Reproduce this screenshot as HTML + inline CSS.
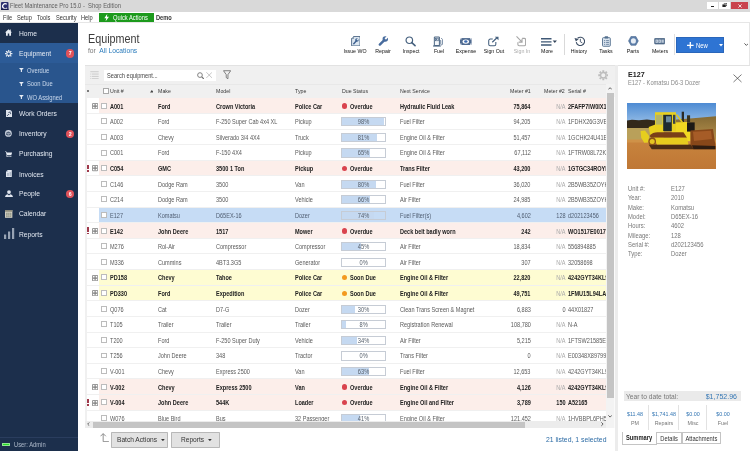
<!DOCTYPE html>
<html>
<head>
<meta charset="utf-8">
<title>Fleet Maintenance Pro</title>
<style>
*{box-sizing:border-box;margin:0;padding:0}
html,body{width:750px;height:451px;overflow:hidden;background:#fff;font-family:"Liberation Sans",sans-serif}
body{position:relative;font-size:6.4px;color:#666}
#app{position:absolute;left:0;top:0;width:750px;height:451px;will-change:transform;opacity:.999}
.abs{position:absolute}
i,em{font-style:normal}
#titlebar{left:0;top:0;width:750px;height:12px;background:#d9d9d9}
#titlebar .t{left:10px;top:1px;transform:scaleX(.842);transform-origin:0 50%;font-size:6.9px;color:#606060;white-space:pre;line-height:10px}
#menubar{left:0;top:12px;width:750px;height:11px;background:#fff}
#menubar span{position:absolute;transform:scaleX(.86);transform-origin:0 50%;top:0.5px;font-size:6.6px;color:#333;line-height:10px}
#qa{left:99px;top:12.8px;width:54.5px;height:9.7px;background:#1c9a1c;color:#fff;font-size:6.7px;line-height:9.7px}
/* sidebar */
#side{left:0;top:23px;width:78px;height:428px;background:#1c2f4c}
#side .sel{left:0;top:20.3px;width:78px;height:60px;background:linear-gradient(#2c5b97 0,#2c5b97 20px,#29558d 20px)}
#side .it{position:absolute;transform:scaleX(.85);transform-origin:0 50%;left:18.5px;color:#e3e9f2;font-size:7.9px;line-height:10px;white-space:nowrap}
#side .sub{position:absolute;transform:scaleX(.86);transform-origin:0 50%;left:27.4px;color:#c9d8ec;font-size:6.75px;line-height:8px;white-space:nowrap}
#side .badge{position:absolute;left:66px;width:8.4px;height:8.4px;border-radius:50%;background:#e0525a;color:#fff;font-size:5.2px;line-height:8.6px;text-align:center;font-weight:bold}
#side svg{position:absolute}
/* main */
#h1{transform:scaleX(.87);transform-origin:0 50%;left:87.5px;top:30.6px;font-size:12.4px;color:#3c3c3c;line-height:17px}
#h2{transform:scaleX(.86);transform-origin:0 50%;left:88px;top:45.5px;font-size:7.8px;color:#777;line-height:10px;white-space:pre}
#h2 b{font-weight:normal;color:#2b7cbc}
.tb{position:absolute;transform:scaleX(.87);top:47.8px;font-size:6.05px;color:#111;text-align:center;width:40px;margin-left:-20px;line-height:7px;white-space:nowrap}
.tbi{position:absolute;top:35px}
/* grid */
#gridbg{left:85px;top:65px;width:532.5px;height:365.5px;background:#f0f0f0;border-top:1px solid #e2e2e2}
#rows{left:0;top:98.4px;width:606.5px;height:323px;overflow:hidden}
.row{position:absolute;left:0;width:607px;height:15.61px;line-height:15.61px;font-size:6.35px;color:#5a5a5a;white-space:nowrap}
.row .bg{position:absolute;left:87.2px;top:0;right:0;bottom:0;background:#fff;border-bottom:.7px solid #f0f0f0}
.row.pink .bg{background:linear-gradient(90deg,#fff 0,#fff 12.1px,#fceeea 12.1px)}
.row.yel .bg{background:linear-gradient(90deg,#fff 0,#fff 12.1px,#fefcd2 12.1px)}
.row.sel .bg{background:linear-gradient(90deg,#fff 0,#fff 12.1px,#c6dcf5 12.1px)}
.row.b{font-weight:bold;color:#222}
.row span{position:absolute;top:.25px;transform:scaleX(.875);transform-origin:0 50%}
.row .c7,.row .c8{transform-origin:100% 50%}
.row .pb{transform:none}
.row .pb em{display:inline-block;transform:scaleX(.875)}
.row .c1{left:110px}.row .c2{left:158px}.row .c3{left:215.5px}.row .c4{left:295px}.row .c5{left:350.4px}
.row .c6{left:400px}.row .c7{right:76.5px}.row .c8{right:41.2px}.row .c8.na{color:#aaa;font-weight:normal}.row .c9{left:568px}
.row .cb{position:absolute;left:101px;top:4.4px;width:6px;height:5.9px;border:0.8px solid #bcbcbc;background:#fff}
.row .exp{position:absolute;left:92.2px;top:4.6px;width:6.2px;height:6.2px}
.row .bang{position:absolute;left:87.4px;top:4.1px;width:1.500px;height:4.2px;background:#a03a4c}
.row .bang:after{content:"";position:absolute;left:0;top:5.2px;width:1.500px;height:1.400px;background:#a03a4c}
.row .dot{position:absolute;left:341.700px;top:5px;width:5.300px;height:5.300px;border-radius:50%}
.dot.red{background:#d9434e}.dot.org{background:#f39a1f}
.row .pb{left:341.3px;top:3.2px;width:44.4px;height:9.2px;border:0.8px solid #c6ccd5;background:#fff;line-height:7.8px;text-align:center;font-size:6.5px;color:#56606c}
.row.sel .pb{background:transparent}
.row .pb i{position:absolute;left:0;top:0;bottom:0;background:#c5d9f1}
.row .pb em{position:relative}
.hd{position:absolute;transform:scaleX(.87);transform-origin:0 50%;top:87.1px;font-size:6.05px;color:#383838;line-height:8px;white-space:nowrap}
/* detail */
#det{left:618px;top:65px;width:132px;height:386px;background:#fff}
.dl{position:absolute;transform:scaleX(.9);transform-origin:0 50%;font-size:6.5px;color:#777;line-height:8px;white-space:nowrap}
.btn{top:432.300px;height:15.400px;background:#e2e2e2;border:.8px solid #b8b8b8;border-radius:.8px;font-size:7.600px;color:#333;line-height:13.600px}
.btn span{position:absolute;white-space:nowrap;transform:scaleX(.87);transform-origin:0 50%}
.amt{position:absolute;width:40px;margin-left:-20px;text-align:center;font-size:6.200px;line-height:8px;white-space:nowrap;transform:scaleX(.87)}
.tab{top:431.600px;height:12.400px;border:.8px solid #c4c4c4;background:#fff;font-size:6.600px;color:#333;text-align:center;line-height:11.800px;white-space:nowrap}
.tab span{display:inline-block;transform:scaleX(.87)}
.row.sel{color:#505e72}

</style>
</head>
<body>
<div id="app">
<div id="titlebar" class="abs"><div class="t abs">Fleet Maintenance Pro 15.0 -  Shop Edition</div>
<svg class="abs" style="left:1px;top:1.5px" width="7.5" height="8.5" viewBox="0 0 15 17"><rect x="0" y="0" width="15" height="17" rx="2" fill="#2c2f6e"/><path d="M11.5 4.5A5 5 0 1 0 12 12" fill="none" stroke="#fff" stroke-width="2.6"/><rect x="0" y="13.5" width="15" height="3.5" fill="#1a1c4a"/></svg>
<div class="abs" style="left:707.3px;top:2px;width:11px;height:6.8px;background:#fff"></div>
<div class="abs" style="left:711.3px;top:5.6px;width:3px;height:1px;background:#222"></div>
<div class="abs" style="left:719.3px;top:2px;width:10.8px;height:6.8px;background:#fff"></div>
<svg class="abs" style="left:722px;top:3.3px" width="5.4" height="4.4" viewBox="0 0 54 44"><path d="M18 2h32v24h-8" fill="none" stroke="#222" stroke-width="8"/><rect x="4" y="14" width="34" height="26" fill="#222"/></svg>
<div class="abs" style="left:731.2px;top:2px;width:16.8px;height:7px;background:#c9434c"></div>
<svg class="abs" style="left:737.6px;top:3.5px" width="4" height="4" viewBox="0 0 10 10"><path d="M1 1l8 8M9 1l-8 8" stroke="#fff" stroke-width="2"/></svg>
</div>
<div id="menubar" class="abs">
<span style="left:3px">File</span><span style="left:16.5px">Setup</span><span style="left:36.5px">Tools</span><span style="left:55.5px">Security</span><span style="left:81px">Help</span>
<span style="left:156px;font-weight:bold">Demo</span>
</div>
<div class="abs" style="left:0;top:22.2px;width:750px;height:.8px;background:#e6e6e6"></div>
<div id="qa" class="abs"><span style="position:absolute;left:14px;transform:scaleX(.86);transform-origin:0 50%;white-space:nowrap">Quick Actions</span>
<svg class="abs" style="left:5px;top:1.2px" width="5.4" height="7.4" viewBox="0 0 9 14"><path d="M5.5 0L0 8h3.6L2.4 14 9 5.2H5z" fill="#fff"/></svg></div>
<div id="side" class="abs">
<div class="sel abs"></div>
<div class="it" style="top:6.3px">Home</div>
<div class="it" style="top:26.3px">Equipment</div>
<div class="sub" style="top:43.7px">Overdue</div>
<div class="sub" style="top:57.1px">Soon Due</div>
<div class="sub" style="top:70.7px">WO Assigned</div>
<div class="it" style="top:85.8px">Work Orders</div>
<div class="it" style="top:105.6px">Inventory</div>
<div class="it" style="top:126.2px">Purchasing</div>
<div class="it" style="top:146.6px">Invoices</div>
<div class="it" style="top:166.2px">People</div>
<div class="it" style="top:186.2px">Calendar</div>
<div class="it" style="top:207.3px">Reports</div>
<div class="badge" style="top:26.2px">7</div>
<div class="badge" style="top:106.6px">2</div>
<div class="badge" style="top:166.7px">6</div>
<!-- home -->
<svg style="left:5.4px;top:6.4px" width="7" height="7" viewBox="0 0 14 14"><path d="M7 0.5L0 7h2v6.5h3.6V9h2.8v4.5H12V7h2L11.5 4.6V1.2H9.6v1.7z" fill="#e8edf4"/></svg>
<!-- gear -->
<svg style="left:5.2px;top:26.8px" width="7.4" height="7.4" viewBox="0 0 20 20"><g fill="none" stroke="#e8edf4"><circle cx="10" cy="10" r="5" stroke-width="3"/><g stroke-width="3.2"><path d="M10 0v4M10 16v4M0 10h4M16 10h4M2.9 2.9l2.9 2.9M14.2 14.2l2.9 2.9M17.1 2.9l-2.9 2.9M5.8 14.2l-2.9 2.9"/></g></g></svg>
<!-- funnels -->
<svg style="left:19px;top:45.2px" width="4.8" height="4" viewBox="0 0 12 10"><path d="M0 0h12L7.4 5v5H4.6V5z" fill="#e8edf4"/></svg>
<svg style="left:19px;top:58.6px" width="4.8" height="4" viewBox="0 0 12 10"><path d="M0 0h12L7.4 5v5H4.6V5z" fill="#e8edf4"/></svg>
<svg style="left:19px;top:72.2px" width="4.8" height="4" viewBox="0 0 12 10"><path d="M0 0h12L7.4 5v5H4.6V5z" fill="#e8edf4"/></svg>
<!-- work orders -->
<svg style="left:5.6px;top:87px" width="6.2" height="7.2" viewBox="0 0 12 14"><path d="M0 0h8.5L12 3.5V14H0z" fill="#dfe5ee"/><path d="M8.5 0v3.5H12" fill="#9fb0c8"/><path d="M2 11.5l3.5-3.5M5 5.5a2 2 0 1 1 2.6 2.6" stroke="#1b2d4b" stroke-width="1.6" fill="none"/></svg>
<!-- inventory -->
<svg style="left:5.4px;top:107.4px" width="6.8" height="6.8" viewBox="0 0 14 14"><circle cx="7" cy="7" r="7" fill="#c9d1dd"/><path d="M2 5l5-2 5 2-5 2zM2 6v4l4.6 2V8zM12 6v4l-4.6 2V8z" fill="#55657c"/></svg>
<!-- cart -->
<svg style="left:5.2px;top:127.6px" width="7.2" height="6.8" viewBox="0 0 15 14"><path d="M0 0.8h2.8l.8 2H15l-1.8 5.6H4.6L4 10h9.6v1.4H2.4l1-3.2L1.8 2.2H0z" fill="#e8edf4"/><circle cx="4.6" cy="12.6" r="1.4" fill="#e8edf4"/><circle cx="11.8" cy="12.6" r="1.4" fill="#e8edf4"/></svg>
<!-- invoices -->
<svg style="left:6px;top:147.2px" width="5.8" height="7" viewBox="0 0 12 14"><path d="M3.4 0H12v14H0V3.4z" fill="#dfe5ee"/><path d="M0 3.4h3.4V0" fill="#8fa0b8"/><path d="M2 7h4M2 9h4M2 11h4M7.4 5h3M7.4 7h3M7.4 9h3M7.4 11h3" stroke="#7f8fa6" stroke-width="1"/></svg>
<!-- people -->
<svg style="left:4.8px;top:166.6px" width="8" height="7.6" viewBox="0 0 16 15"><circle cx="8" cy="4" r="3.8" fill="#dfe5ee"/><path d="M0 15c0-4 3-6 5.4-6.4L8 11l2.6-2.4C13 9 16 11 16 15z" fill="#dfe5ee"/></svg>
<!-- calendar -->
<svg style="left:5.2px;top:187px" width="7.4" height="7.8" viewBox="0 0 15 16"><rect x="0" y="0" width="15" height="16" fill="#d8d4c6"/><rect x="0" y="0" width="15" height="3.6" fill="#8b8a7c"/><rect x="2" y="5.6" width="11" height="8.4" fill="#8e9485"/><path d="M2 8.4h11M2 11.2h11M5.6 5.6v8.4M9.2 5.6v8.4" stroke="#d8d4c6" stroke-width=".8"/></svg>
<!-- reports -->
<svg style="left:3.6px;top:205.4px" width="11" height="11" viewBox="0 0 22 22"><rect x="0" y="13" width="4.4" height="9" fill="#98a3b3"/><rect x="8" y="7" width="4.4" height="15" fill="#98a3b3"/><rect x="16" y="0" width="4.4" height="22" fill="#98a3b3"/></svg>
<div class="abs" style="left:0;top:414.2px;width:78px;height:.8px;background:#2a3d5e"></div>
<div class="abs" style="left:2.2px;top:419.600px;width:7.4px;height:3.6px;background:#27d927;border:.6px solid #8fe88f"></div>
<div class="sub" style="left:14px;top:418.100px;color:#aeb9ca">User: Admin</div>
</div>
<div id="h1" class="abs">Equipment</div>
<div id="h2" class="abs">for  <b>All Locations</b></div>
<!-- toolbar -->
<!-- Issue WO -->
<svg class="tbi" style="left:350.600px;top:36px" width="9.600" height="10.400" viewBox="0 0 19 21"><path d="M5 1H18v19H1V5z" fill="#dde7f1" stroke="#4d6885" stroke-width="1.800"/><path d="M1 5h4V1" fill="#fff" stroke="#4d6885" stroke-width="1.400"/><circle cx="11.800" cy="8.200" r="3.600" fill="#3f6290"/><path d="M11.800 8.200L16 4" stroke="#dde7f1" stroke-width="2.400"/><path d="M5.400 15.600l5-5.400" stroke="#3f6290" stroke-width="3" stroke-linecap="round"/></svg>
<!-- Repair (wrench) -->
<svg class="tbi" style="left:377.600px;top:36.400px" width="10.600" height="10.200" viewBox="0 0 21 20"><circle cx="14.400" cy="5.800" r="5.400" fill="#486c9e"/><path d="M14.400 5.800L21 -0.800" stroke="#fff" stroke-width="3.800"/><path d="M3.600 16.800L12 8.400" stroke="#486c9e" stroke-width="4.800" stroke-linecap="round"/></svg>
<!-- Inspect -->
<svg class="tbi" style="left:405px;top:36.2px" width="11" height="10.4" viewBox="0 0 22 21"><circle cx="8.6" cy="8.6" r="6.6" fill="none" stroke="#45607e" stroke-width="2.4"/><path d="M13.6 13.4l6.6 6" stroke="#45607e" stroke-width="3.2" stroke-linecap="round"/></svg>
<!-- Fuel -->
<svg class="tbi" style="left:432.800px;top:36px" width="11.200" height="10.600" viewBox="0 0 22 21"><path d="M2.600 19V2h10v17z" fill="#f4f7fa" stroke="#45607e" stroke-width="1.900"/><rect x="4.800" y="4.400" width="5.600" height="5" fill="#fff" stroke="#45607e" stroke-width="1.300"/><circle cx="7.200" cy="6.600" r="1.400" fill="#3f5f8a"/><path d="M0 19.800h15.400" stroke="#45607e" stroke-width="2.200"/><path d="M12.600 9h2.600v7a1.700 1.700 0 0 0 3.400 0V6.800L16.200 4" fill="none" stroke="#5a7290" stroke-width="1.600"/></svg>
<!-- Expense -->
<svg class="tbi" style="left:460.2px;top:37.8px" width="11.6" height="7.2" viewBox="0 0 23 14"><rect x="0" y="0" width="23" height="14" fill="#506b90"/><path d="M0 0h3v3H0zM20 0h3v3h-3zM0 11h3v3H0zM20 11h3v3h-3z" fill="#fff" opacity=".75"/><ellipse cx="11.5" cy="7" rx="6.4" ry="4.4" fill="#fff"/><ellipse cx="11.5" cy="7" rx="3.4" ry="2.5" fill="#3f6db0"/></svg>
<!-- Sign Out -->
<svg class="tbi" style="left:487.800px;top:36.400px" width="11.200" height="10.200" viewBox="0 0 22 20"><path d="M9.400 6H4.400a3 3 0 0 0-3 3v7A3 3 0 0 0 4.400 19h8a3 3 0 0 0 3-3V11.600" fill="none" stroke="#45607e" stroke-width="2.100"/><path d="M8.400 12.200L17.600 3.400" stroke="#45607e" stroke-width="2.400"/><path d="M13.400 1.400h7.200v7z" fill="#45607e"/></svg>
<!-- Sign In -->
<svg class="tbi" style="left:516px;top:36px" width="10.400" height="10.600" viewBox="0 0 21 21"><path d="M12.400 4.600h4.400a2.600 2.600 0 0 1 2.600 2.600v9.600a2.600 2.600 0 0 1-2.600 2.600H6.400a2.600 2.600 0 0 1-2.600-2.600V12.400" fill="none" stroke="#a6a6a6" stroke-width="2.200"/><path d="M1 0.600l10.400 10.800M5.400 12.200h6.800V5.600" fill="none" stroke="#a6a6a6" stroke-width="2.200"/></svg>
<!-- More -->
<svg class="tbi" style="left:540.800px;top:37.600px" width="16" height="8" viewBox="0 0 32 16"><path d="M0 1.600h21M0 7.800h21M0 14h21" stroke="#3f5876" stroke-width="2.800"/><path d="M23.400 5h8.400l-4.200 4.800z" fill="#33445a"/></svg>
<!-- History -->
<svg class="tbi" style="left:573.600px;top:36px" width="11.400" height="10.600" viewBox="0 0 23 21"><path d="M4.600 12A8.400 8.400 0 1 0 7.300 4.400" fill="none" stroke="#3e4f66" stroke-width="2.200"/><path d="M1 3.600l2.800 7.200 5.800-4.800z" fill="#3e4f66"/><path d="M12.800 5.600v5.800l4 2.300" fill="none" stroke="#3e4f66" stroke-width="1.800"/></svg>
<!-- Tasks -->
<svg class="tbi" style="left:601.800px;top:36px" width="8.800" height="10.800" viewBox="0 0 18 22"><rect x="1" y="3.400" width="16" height="17.600" rx="1.800" fill="#dbe5ef" stroke="#54708f" stroke-width="1.900"/><rect x="5.400" y="0.600" width="7.200" height="4.600" rx="1.200" fill="#54708f"/><path d="M4 9.400h2.600M8.400 9.400h5.800M4 13.200h2.600M8.400 13.200h5.800M4 17h2.600M8.400 17h5.800" stroke="#54708f" stroke-width="1.600"/></svg>
<!-- Parts -->
<svg class="tbi" style="left:627.800px;top:36.200px" width="10.800" height="9.800" viewBox="0 0 22 20"><path d="M6 1h10l5 9-5 9H6L1 10z" fill="#5c7ea9" stroke="#4a6890" stroke-width="1.200"/><circle cx="11" cy="10" r="5.200" fill="#e6edf5"/></svg>
<!-- Meters -->
<svg class="tbi" style="left:654px;top:38.200px" width="11.400" height="6.400" viewBox="0 0 24 14"><rect x="0.800" y="0.800" width="22.400" height="12.400" rx="1.600" fill="#56708f" stroke="#465f7e" stroke-width="1.400"/><rect x="3" y="3.600" width="5" height="6.800" fill="#dfe7f0"/><rect x="9.400" y="3.600" width="5" height="6.800" fill="#dfe7f0"/><rect x="15.800" y="3.600" width="5.200" height="6.800" fill="#b9c6d6"/><path d="M5.500 5v4M11.900 5v4" stroke="#56708f" stroke-width="1.400"/></svg>
<div class="tb" style="left:354.800px">Issue WO</div>
<div class="tb" style="left:382.800px">Repair</div>
<div class="tb" style="left:410.600px">Inspect</div>
<div class="tb" style="left:438.500px">Fuel</div>
<div class="tb" style="left:466px">Expense</div>
<div class="tb" style="left:493.800px">Sign Out</div>
<div class="tb" style="left:521.600px;color:#aaa">Sign In</div>
<div class="tb" style="left:547px">More</div>
<div class="tb" style="left:579.400px">History</div>
<div class="tb" style="left:606.200px">Tasks</div>
<div class="tb" style="left:633px">Parts</div>
<div class="tb" style="left:659.800px">Meters</div>
<div class="abs" style="left:564.200px;top:34.400px;width:.8px;height:20.600px;background:#d9d9d9"></div>
<div class="abs" style="left:674px;top:34.400px;width:.8px;height:20.600px;background:#e0e0e0"></div>
<div class="abs" style="left:676.200px;top:36.600px;width:48px;height:16.400px;background:#2e74d3;border:.8px solid #2a66ba;color:#fff;font-size:6.800px;line-height:15px"><span style="position:absolute;left:18.800px;transform:scaleX(.87);transform-origin:0 50%">New</span>
<svg class="abs" style="left:10.200px;top:4.400px" width="6.600" height="6.600" viewBox="0 0 10 10"><path d="M5 0v10M0 5h10" stroke="#fff" stroke-width="2"/></svg>
<svg class="abs" style="left:41.800px;top:6.800px" width="4" height="2.400" viewBox="0 0 10 6"><path d="M0 0h10L5 6z" fill="#fff"/></svg>
</div>
<svg class="abs" style="left:743.600px;top:43.200px" width="4.800" height="3.200" viewBox="0 0 12 8"><path d="M1 1l5 5 5-5" fill="none" stroke="#333" stroke-width="2"/></svg>
<div class="abs" style="left:749px;top:23px;width:1px;height:428px;background:#e6e6e6"></div>
<div id="grid" class="abs">
<div id="gridbg" class="abs"></div>
<div class="abs" style="left:85px;top:83.600px;width:533px;height:.8px;background:#e8e8e8"></div>
<!-- list icon -->
<svg class="abs" style="left:90px;top:71px" width="9" height="8.400" viewBox="0 0 17 17"><path d="M0 1.500h17M3.400 6.200h13.600M3.400 10.900h13.600M3.400 15.600h13.600" stroke="#c3c3c3" stroke-width="1.700"/><path d="M0 6.200h2M0 10.900h2M0 15.600h2" stroke="#c3c3c3" stroke-width="1.700"/></svg>
<div class="abs" style="left:104px;top:70.200px;width:112.200px;height:10.600px;background:#fff"></div>
<div class="abs" style="left:107px;top:71.500px;font-size:6.500px;line-height:8px;color:#444;white-space:nowrap;transform:scaleX(.87);transform-origin:0 50%">Search equipment...</div>
<svg class="abs" style="left:196.800px;top:71.600px" width="7.200" height="7.400" viewBox="0 0 14 14"><circle cx="5.800" cy="5.800" r="4.600" fill="none" stroke="#707070" stroke-width="1.700"/><path d="M9.200 9.200l4 4" stroke="#707070" stroke-width="2.200"/></svg>
<svg class="abs" style="left:206px;top:72.400px" width="6.400" height="6.200" viewBox="0 0 12 12"><path d="M0.500 0.500l11 11M11.500 0.500l-11 11" stroke="#9a9a9a" stroke-width="1.100"/></svg>
<svg class="abs" style="left:223px;top:70.400px" width="8.200" height="9.400" viewBox="0 0 16 18.300"><path d="M1 1.400h14L9.700 9v8L6.300 14.800V9z" fill="none" stroke="#555" stroke-width="1.400" stroke-linejoin="round"/></svg>
<!-- gear -->
<svg class="abs" style="left:597.800px;top:70px" width="10.600" height="10.600" viewBox="0 0 20 20"><g fill="none" stroke="#bdbdbd"><circle cx="10" cy="10" r="5.200" stroke-width="2.600"/><g stroke-width="3.600"><path d="M10 0.500v3.400M10 16.100v3.400M0.500 10h3.400M16.100 10h3.400M3.300 3.300l2.400 2.400M14.300 14.300l2.400 2.400M16.700 3.300l-2.400 2.400M5.700 14.300l-2.400 2.400"/></g></g></svg>
<div class="abs" style="left:87.200px;top:89.800px;width:2.200px;height:2.200px;border-radius:50%;background:#555"></div>
<div class="hd" style="left:110px">Unit #</div>
<div class="hd" style="left:158px">Make</div>
<div class="hd" style="left:215.500px">Model</div>
<div class="hd" style="left:295px">Type</div>
<div class="hd" style="left:341.500px">Due Status</div>
<div class="hd" style="left:400px">Next Service</div>
<div class="hd" style="left:509.500px">Meter #1</div>
<div class="hd" style="left:544px">Meter #2</div>
<div class="hd" style="left:568px">Serial #</div>
<svg class="abs" style="left:149.600px;top:90.200px" width="3.600" height="2.400" viewBox="0 0 9 6"><path d="M0 6h9L4.500 0z" fill="#444"/></svg>
<i class="abs" style="left:102.600px;top:88.200px;width:6px;height:6px;border:0.700px solid #a9a9a9;background:#fff"></i>
<div id="rows" class="abs">
<div class="row pink b" style="top:0.00px"><i class="bg"></i><svg class="exp" viewBox="0 0 12 12"><rect x="1" y="1" width="10" height="10" rx="1" fill="#fff" stroke="#9a9a9a" stroke-width="2"/><path d="M6 2v8M2 6h8" stroke="#7c7c7c" stroke-width="2.100"/></svg><i class="cb"></i><span class="c1">A001</span><span class="c2">Ford</span><span class="c3">Crown Victoria</span><span class="c4">Police Car</span><i class="dot red"></i><span class="c5">Overdue</span><span class="c6">Hydraulic Fluid Leak</span><span class="c7">75,864</span><span class="c8 na">N/A</span><span class="c9">2FAFP7IW0IX1</span></div>
<div class="row" style="top:15.61px"><i class="bg"></i><i class="cb"></i><span class="c1">A002</span><span class="c2">Ford</span><span class="c3">F-250 Super Cab 4x4 XL</span><span class="c4">Pickup</span><span class="pb"><i style="width:98%"></i><em>98%</em></span><span class="c6">Fuel Filter</span><span class="c7">94,205</span><span class="c8 na">N/A</span><span class="c9">1FDHX26G3VEC</span></div>
<div class="row" style="top:31.22px"><i class="bg"></i><i class="cb"></i><span class="c1">A003</span><span class="c2">Chevy</span><span class="c3">Silverado 3/4 4X4</span><span class="c4">Truck</span><span class="pb"><i style="width:81%"></i><em>81%</em></span><span class="c6">Engine Oil &amp; Filter</span><span class="c7">51,457</span><span class="c8 na">N/A</span><span class="c9">1GCHK24U41E</span></div>
<div class="row" style="top:46.83px"><i class="bg"></i><i class="cb"></i><span class="c1">C001</span><span class="c2">Ford</span><span class="c3">F-150 4X4</span><span class="c4">Pickup</span><span class="pb"><i style="width:65%"></i><em>65%</em></span><span class="c6">Engine Oil &amp; Filter</span><span class="c7">67,112</span><span class="c8 na">N/A</span><span class="c9">1FTRW08L72KE</span></div>
<div class="row pink b" style="top:62.44px"><i class="bg"></i><i class="bang"></i><svg class="exp" viewBox="0 0 12 12"><rect x="1" y="1" width="10" height="10" rx="1" fill="#fff" stroke="#9a9a9a" stroke-width="2"/><path d="M6 2v8M2 6h8" stroke="#7c7c7c" stroke-width="2.100"/></svg><i class="cb"></i><span class="c1">C054</span><span class="c2">GMC</span><span class="c3">3500 1 Ton</span><span class="c4">Pickup</span><i class="dot red"></i><span class="c5">Overdue</span><span class="c6">Trans Filter</span><span class="c7">43,200</span><span class="c8 na">N/A</span><span class="c9">1GTGC34ROYR</span></div>
<div class="row" style="top:78.05px"><i class="bg"></i><i class="cb"></i><span class="c1">C146</span><span class="c2">Dodge Ram</span><span class="c3">3500</span><span class="c4">Van</span><span class="pb"><i style="width:80%"></i><em>80%</em></span><span class="c6">Fuel Filter</span><span class="c7">36,020</span><span class="c8 na">N/A</span><span class="c9">2B5WB35ZOYK</span></div>
<div class="row" style="top:93.66px"><i class="bg"></i><i class="cb"></i><span class="c1">C214</span><span class="c2">Dodge Ram</span><span class="c3">3500</span><span class="c4">Vehicle</span><span class="pb"><i style="width:66%"></i><em>66%</em></span><span class="c6">Air Filter</span><span class="c7">24,985</span><span class="c8 na">N/A</span><span class="c9">2B5WB35ZOYK</span></div>
<div class="row sel" style="top:109.27px"><i class="bg"></i><i class="cb"></i><span class="c1">E127</span><span class="c2">Komatsu</span><span class="c3">D65EX-16</span><span class="c4">Dozer</span><span class="pb"><i style="width:74%"></i><em>74%</em></span><span class="c6">Fuel Filter(s)</span><span class="c7">4,602</span><span class="c8">128</span><span class="c9">d202123456</span></div>
<div class="row pink b" style="top:124.88px"><i class="bg"></i><i class="bang"></i><svg class="exp" viewBox="0 0 12 12"><rect x="1" y="1" width="10" height="10" rx="1" fill="#fff" stroke="#9a9a9a" stroke-width="2"/><path d="M6 2v8M2 6h8" stroke="#7c7c7c" stroke-width="2.100"/></svg><i class="cb"></i><span class="c1">E142</span><span class="c2">John Deere</span><span class="c3">1517</span><span class="c4">Mower</span><i class="dot red"></i><span class="c5">Overdue</span><span class="c6">Deck belt badly worn</span><span class="c7">242</span><span class="c8 na">N/A</span><span class="c9">WO1517E00174</span></div>
<div class="row" style="top:140.49px"><i class="bg"></i><i class="cb"></i><span class="c1">M276</span><span class="c2">Rol-Air</span><span class="c3">Compressor</span><span class="c4">Compressor</span><span class="pb"><i style="width:45%"></i><em>45%</em></span><span class="c6">Air Filter</span><span class="c7">18,834</span><span class="c8 na">N/A</span><span class="c9">556894885</span></div>
<div class="row" style="top:156.10px"><i class="bg"></i><i class="cb"></i><span class="c1">M336</span><span class="c2">Cummins</span><span class="c3">4BT3.3G5</span><span class="c4">Generator</span><span class="pb"><i style="width:0%"></i><em>0%</em></span><span class="c6">Air Filter</span><span class="c7">307</span><span class="c8 na">N/A</span><span class="c9">32058698</span></div>
<div class="row yel b" style="top:171.71px"><i class="bg"></i><svg class="exp" viewBox="0 0 12 12"><rect x="1" y="1" width="10" height="10" rx="1" fill="#fff" stroke="#9a9a9a" stroke-width="2"/><path d="M6 2v8M2 6h8" stroke="#7c7c7c" stroke-width="2.100"/></svg><i class="cb"></i><span class="c1">PD158</span><span class="c2">Chevy</span><span class="c3">Tahoe</span><span class="c4">Police Car</span><i class="dot org"></i><span class="c5">Soon Due</span><span class="c6">Engine Oil &amp; Filter</span><span class="c7">22,820</span><span class="c8 na">N/A</span><span class="c9">4242GYT34KL9</span></div>
<div class="row yel b" style="top:187.32px"><i class="bg"></i><svg class="exp" viewBox="0 0 12 12"><rect x="1" y="1" width="10" height="10" rx="1" fill="#fff" stroke="#9a9a9a" stroke-width="2"/><path d="M6 2v8M2 6h8" stroke="#7c7c7c" stroke-width="2.100"/></svg><i class="cb"></i><span class="c1">PD330</span><span class="c2">Ford</span><span class="c3">Expedition</span><span class="c4">Police Car</span><i class="dot org"></i><span class="c5">Soon Due</span><span class="c6">Engine Oil &amp; Filter</span><span class="c7">49,751</span><span class="c8 na">N/A</span><span class="c9">1FMU15L94LA1</span></div>
<div class="row" style="top:202.93px"><i class="bg"></i><i class="cb"></i><span class="c1">Q076</span><span class="c2">Cat</span><span class="c3">D7-G</span><span class="c4">Dozer</span><span class="pb"><i style="width:30%"></i><em>30%</em></span><span class="c6">Clean Trans Screen &amp; Magnet</span><span class="c7">6,883</span><span class="c8">0</span><span class="c9">44X01827</span></div>
<div class="row" style="top:218.54px"><i class="bg"></i><i class="cb"></i><span class="c1">T105</span><span class="c2">Trailer</span><span class="c3">Trailer</span><span class="c4">Trailer</span><span class="pb"><i style="width:8%"></i><em>8%</em></span><span class="c6">Registration Renewal</span><span class="c7">108,780</span><span class="c8 na">N/A</span><span class="c9">N-A</span></div>
<div class="row" style="top:234.15px"><i class="bg"></i><i class="cb"></i><span class="c1">T200</span><span class="c2">Ford</span><span class="c3">F-250 Super Duty</span><span class="c4">Vehicle</span><span class="pb"><i style="width:34%"></i><em>34%</em></span><span class="c6">Air Filter</span><span class="c7">5,215</span><span class="c8 na">N/A</span><span class="c9">1FTSW21585EC</span></div>
<div class="row" style="top:249.76px"><i class="bg"></i><i class="cb"></i><span class="c1">T256</span><span class="c2">John Deere</span><span class="c3">348</span><span class="c4">Tractor</span><span class="pb"><i style="width:0%"></i><em>0%</em></span><span class="c6">Trans Filter</span><span class="c7">0</span><span class="c8 na">N/A</span><span class="c9">E00348X89799</span></div>
<div class="row" style="top:265.37px"><i class="bg"></i><i class="cb"></i><span class="c1">V-001</span><span class="c2">Chevy</span><span class="c3">Express 2500</span><span class="c4">Van</span><span class="pb"><i style="width:63%"></i><em>63%</em></span><span class="c6">Fuel Filter</span><span class="c7">12,653</span><span class="c8 na">N/A</span><span class="c9">4242GYT34KL9</span></div>
<div class="row pink b" style="top:280.98px"><i class="bg"></i><svg class="exp" viewBox="0 0 12 12"><rect x="1" y="1" width="10" height="10" rx="1" fill="#fff" stroke="#9a9a9a" stroke-width="2"/><path d="M6 2v8M2 6h8" stroke="#7c7c7c" stroke-width="2.100"/></svg><i class="cb"></i><span class="c1">V-002</span><span class="c2">Chevy</span><span class="c3">Express 2500</span><span class="c4">Van</span><i class="dot red"></i><span class="c5">Overdue</span><span class="c6">Engine Oil &amp; Filter</span><span class="c7">4,126</span><span class="c8 na">N/A</span><span class="c9">4242GYT34KL9</span></div>
<div class="row pink b" style="top:296.59px"><i class="bg"></i><i class="bang"></i><svg class="exp" viewBox="0 0 12 12"><rect x="1" y="1" width="10" height="10" rx="1" fill="#fff" stroke="#9a9a9a" stroke-width="2"/><path d="M6 2v8M2 6h8" stroke="#7c7c7c" stroke-width="2.100"/></svg><i class="cb"></i><span class="c1">V-004</span><span class="c2">John Deere</span><span class="c3">544K</span><span class="c4">Loader</span><i class="dot red"></i><span class="c5">Overdue</span><span class="c6">Engine Oil and Filter</span><span class="c7">3,789</span><span class="c8">150</span><span class="c9">A52165</span></div>
<div class="row" style="top:312.20px"><i class="bg"></i><i class="cb"></i><span class="c1">W076</span><span class="c2">Blue Bird</span><span class="c3">Bus</span><span class="c4">32 Passenger</span><span class="pb"><i style="width:41%"></i><em>41%</em></span><span class="c6">Engine Oil &amp; Filter</span><span class="c7">121,452</span><span class="c8 na">N/A</span><span class="c9">1HVBBPL6PH51</span></div>
</div>
<!-- scrollbars -->
<div class="abs" style="left:606.400px;top:84.400px;width:11.600px;height:343.600px;background:#f3f3f3"></div>
<div class="abs" style="left:614px;top:97px;width:1.200px;height:331px;background:#fafafa"></div>
<div class="abs" style="left:606.600px;top:92.800px;width:7.400px;height:305px;background:#c4c4c4"></div>
<svg class="abs" style="left:608.200px;top:87px" width="4.200" height="2.800" viewBox="0 0 12 8"><path d="M1 7l5-5 5 5" fill="none" stroke="#444" stroke-width="2.400"/></svg>
<svg class="abs" style="left:608.200px;top:415.400px" width="4.200" height="2.800" viewBox="0 0 12 8"><path d="M1 1l5 5 5-5" fill="none" stroke="#444" stroke-width="2.400"/></svg>
<div class="abs" style="left:85px;top:421.400px;width:521.400px;height:6.800px;background:#ececec"></div>
<div class="abs" style="left:92.600px;top:421.800px;width:432px;height:5.800px;background:#c4c4c4"></div>
<svg class="abs" style="left:87px;top:422.200px" width="2.600" height="4.200" viewBox="0 0 8 12"><path d="M7 1L2 6l5 5" fill="none" stroke="#444" stroke-width="2.400"/></svg>
<svg class="abs" style="left:601px;top:422.400px" width="2.800" height="4.200" viewBox="0 0 8 12"><path d="M1 1l5 5-5 5" fill="none" stroke="#444" stroke-width="2.400"/></svg>
<!-- footer -->
<div class="abs" style="left:78px;top:428px;width:540px;height:23px;background:#fff"></div>
<svg class="abs" style="left:99.600px;top:433px" width="9.400" height="9.400" viewBox="0 0 19 19"><path d="M1 6.600L6.400 1.200l5.400 5.400M6.400 1.600v15.900h11.600" fill="none" stroke="#7c7c7c" stroke-width="1.700"/></svg>
<div class="abs btn" style="left:111.400px;width:56.600px"><span style="left:4.800px">Batch Actions</span><svg class="abs" style="left:48.600px;top:5.700px" width="3.800" height="2.200" viewBox="0 0 10 6"><path d="M0 0h10L5 6z" fill="#333"/></svg></div>
<div class="abs btn" style="left:171px;width:49px"><span style="left:9.400px">Reports</span><svg class="abs" style="left:36.200px;top:5.700px" width="3.800" height="2.200" viewBox="0 0 10 6"><path d="M0 0h10L5 6z" fill="#333"/></svg></div>
<div class="abs" style="left:546.400px;top:435.200px;font-size:7.870px;line-height:9px;color:#2c6ba5;white-space:nowrap;transform:scaleX(.87);transform-origin:0 50%">21 listed, 1 selected</div>
</div>
<div id="det" class="abs"></div>
<div class="abs" style="left:615px;top:65px;width:3.400px;height:386px;background:#ececec"></div>
<div class="abs" style="left:618px;top:65px;width:132px;height:.8px;background:#e2e2e2"></div>
<div class="abs" style="left:627.900px;top:69.600px;font-size:7.900px;font-weight:bold;color:#222;line-height:10px;transform:scaleX(.9);transform-origin:0 50%">E127</div>
<div class="abs" style="left:627.900px;top:79px;font-size:6.400px;color:#8a8a8a;line-height:8px;white-space:nowrap;transform:scaleX(.9);transform-origin:0 50%">E127 - Komatsu D6-3 Dozer</div>
<svg class="abs" style="left:733.400px;top:74.400px" width="9" height="8.600" viewBox="0 0 18 17"><path d="M1 1l16 15M17 1L1 16" stroke="#333" stroke-width="1.300"/></svg>
<svg class="abs" style="left:627.200px;top:103.200px" width="89.200" height="66.200" viewBox="0 0 89.200 66.200">
<defs><linearGradient id="sky" x1="0" y1="0" x2="0" y2="1"><stop offset="0" stop-color="#4d8bd3"/><stop offset="1" stop-color="#8cb7e4"/></linearGradient>
<linearGradient id="gnd" x1="0" y1="0" x2="0" y2="1"><stop offset="0" stop-color="#d39448"/><stop offset="1" stop-color="#bf7735"/></linearGradient>
<linearGradient id="hill" x1="0" y1="0" x2="0" y2="1"><stop offset="0" stop-color="#846a34"/><stop offset="1" stop-color="#b8924e"/></linearGradient></defs>
<rect width="89.200" height="66.200" fill="url(#gnd)"/>
<rect width="89.200" height="18" fill="url(#sky)"/>
<path d="M0 24h30v13.500H0z" fill="#b9a05a"/>
<path d="M26 17.600L50 16.600 66 15.300 89.200 13.300V38H26z" fill="url(#hill)"/>
<path d="M0 17.600L5 16.800 12 17.300 20 16.600 28 17.600V25H0z" fill="#33281a"/>
<path d="M0 36.500h89.200v3H0z" fill="#cf9248"/>
<!-- shadow / lower track -->
<path d="M21.700 41.500h45v4.700h-42z" fill="#4a2c14"/>
<!-- ripper -->
<path d="M13.600 28l4.400-.6 4.200 5.600-1 6.400-4 .4-3-5z" fill="#e6ce1e"/>
<!-- rear body -->
<path d="M21.700 24l8-3h7v14h-13z" fill="#ead21e"/>
<!-- hood -->
<path d="M44.700 19.500L60 19l3.400 5v14l-18.700 1z" fill="#f0d822"/>
<!-- cab -->
<path d="M28 9.200h21v19H28z" fill="#e8d020"/>
<path d="M28.800 11.800h6.600v9.800h-6.600z" fill="#b5b468"/>
<path d="M36.200 11.800h8.600v16.200h-8.600z" fill="#1e2a30"/>
<path d="M39 13.300h5v6h-5z" fill="#6a8a9c"/>
<path d="M46 11.800h2.400v9h-2.400z" fill="#3a4448"/>
<!-- stacks -->
<path d="M54.700 8.700h2.300v10.300h-2.300z" fill="#2a2a26"/>
<path d="M60 12.300h3.100v6.700H60z" fill="#3a3420"/>
<path d="M49.500 11.500l6 8" stroke="#e0c820" stroke-width="1.500"/>
<!-- engine dark -->
<path d="M60 19.400h7.700v9.200H60z" fill="#1c1a16"/>
<!-- track top band -->
<path d="M22.500 33c2-3 5-3.800 8-3.800h26l3.500 5.600H24z" fill="#7a4018"/>
<!-- track frame -->
<path d="M27 34.800h33l1.500 6.700H30z" fill="#e6cc1e"/>
<circle cx="25.200" cy="38.400" r="3.800" fill="#8a5218"/><circle cx="25.200" cy="38.400" r="2.500" fill="#e4c422"/>
<!-- blade -->
<path d="M63.500 27.500L86 26l2.400 16v4.200H66.500l-3-5.200z" fill="#874719"/>
<path d="M66 28.800l18-1 1 8.200-18 2z" fill="#a65c27"/>
<path d="M65 42.300l23.400.7v3.200H66.500z" fill="#2e1c10"/>
</svg>
<div class="dl" style="left:627.600px;top:184.8px">Unit #:</div><div class="dl" style="left:670.600px;top:184.8px">E127</div>
<div class="dl" style="left:627.600px;top:194.2px">Year:</div><div class="dl" style="left:670.600px;top:194.2px">2010</div>
<div class="dl" style="left:627.600px;top:203.5px">Make:</div><div class="dl" style="left:670.600px;top:203.5px">Komatsu</div>
<div class="dl" style="left:627.600px;top:212.9px">Model:</div><div class="dl" style="left:670.600px;top:212.9px">D65EX-16</div>
<div class="dl" style="left:627.600px;top:222.3px">Hours:</div><div class="dl" style="left:670.600px;top:222.3px">4602</div>
<div class="dl" style="left:627.600px;top:231.6px">Mileage:</div><div class="dl" style="left:670.600px;top:231.6px">128</div>
<div class="dl" style="left:627.600px;top:241.0px">Serial #:</div><div class="dl" style="left:670.600px;top:241.0px">d202123456</div>
<div class="dl" style="left:627.600px;top:250.4px">Type:</div><div class="dl" style="left:670.600px;top:250.4px">Dozer</div>
<div class="abs" style="left:624.400px;top:391.200px;width:116.600px;height:9.600px;background:#eaeaea"></div>
<div class="abs" style="left:626.200px;top:391.800px;font-size:7.700px;line-height:9px;color:#777;white-space:nowrap;transform:scaleX(.87);transform-origin:0 50%">Year to date total:</div>
<div class="abs" style="right:13px;top:391.600px;font-size:8.100px;line-height:9px;color:#3577b4;white-space:nowrap;transform:scaleX(.87);transform-origin:100% 50%">$1,752.96</div>
<div class="amt" style="left:634.5px;top:409.500px;color:#3577b4">$11.48</div><div class="amt" style="left:634.5px;top:418.500px;color:#777">PM</div>
<div class="amt" style="left:663.6px;top:409.500px;color:#3577b4">$1,741.48</div><div class="amt" style="left:663.6px;top:418.500px;color:#777">Repairs</div>
<div class="amt" style="left:692.7px;top:409.500px;color:#3577b4">$0.00</div><div class="amt" style="left:692.7px;top:418.500px;color:#777">Misc</div>
<div class="amt" style="left:722.5px;top:409.500px;color:#3577b4">$0.00</div><div class="amt" style="left:722.5px;top:418.500px;color:#777">Fuel</div>
<div class="abs" style="left:648.3px;top:405.200px;width:.8px;height:24.400px;background:#e2e2e2"></div>
<div class="abs" style="left:677.5px;top:405.200px;width:.8px;height:24.400px;background:#e2e2e2"></div>
<div class="abs" style="left:706.3px;top:405.200px;width:.8px;height:24.400px;background:#e2e2e2"></div>
<div class="abs tab" style="left:622.200px;width:34.400px;height:13.200px;border-top:0;font-weight:bold;color:#222"><span>Summary</span></div>
<div class="abs tab" style="left:656.400px;width:25.800px"><span>Details</span></div>
<div class="abs tab" style="left:682px;width:39.400px"><span>Attachments</span></div>
</div>
</body>
</html>
